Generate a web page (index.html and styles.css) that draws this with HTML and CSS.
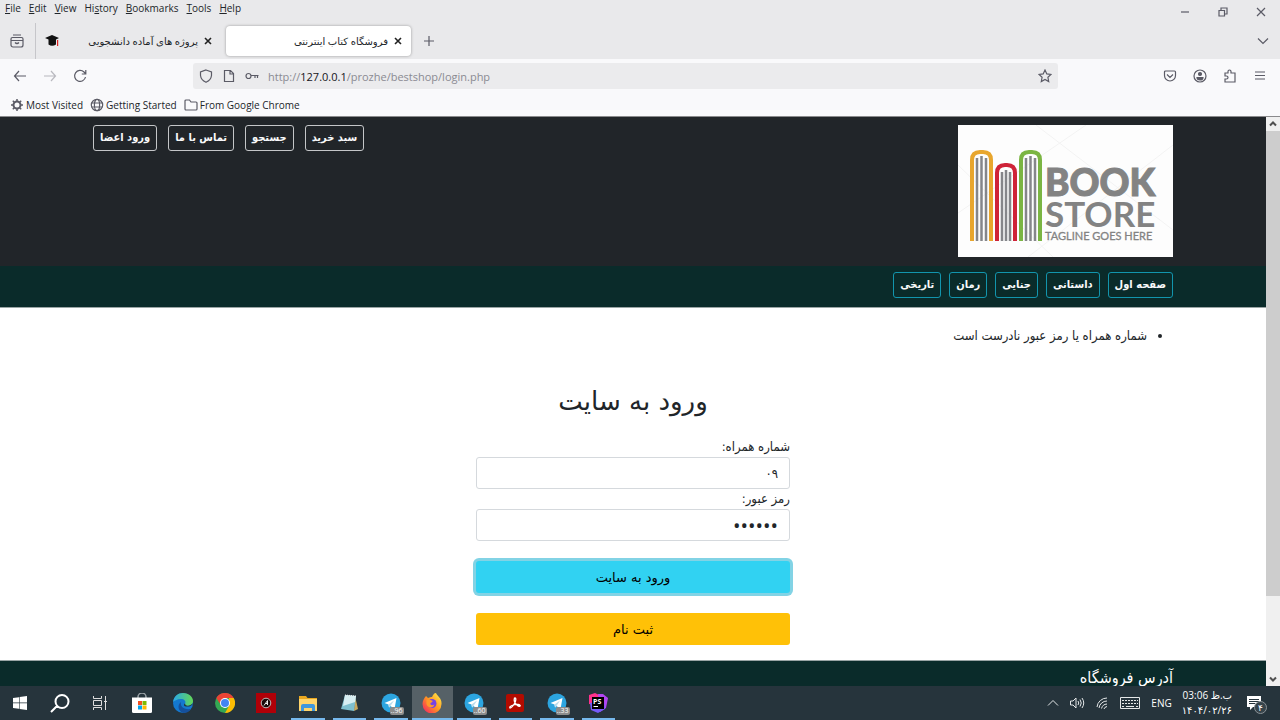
FILE: index.html
```html
<!DOCTYPE html>
<html lang="fa">
<head>
    <meta charset="UTF-8">
    <title>فروشگاه کتاب اینترنتی</title>
    <link rel="stylesheet" href="styles.css">
</head>
<body>
<div class="browser">
    <div class="menubar">
        <button><u>F</u>ile</button>
        <button><u>E</u>dit</button>
        <button><u>V</u>iew</button>
        <button>Hi<u>s</u>tory</button>
        <button><u>B</u>ookmarks</button>
        <button><u>T</u>ools</button>
        <button><u>H</u>elp</button>
        <div class="win-btns">
            <button aria-label="Minimize"><svg width="10" height="10" viewBox="0 0 10 10"><path d="M1 5h8"/></svg></button>
            <button aria-label="Restore"><svg width="10" height="10" viewBox="0 0 10 10"><path d="M1 3.500h5.500V9H1zM3 3V1h6v6H7"/></svg></button>
            <button aria-label="Close"><svg width="10" height="10" viewBox="0 0 10 10"><path d="M1 1l8 8M9 1L1 9"/></svg></button>
        </div>
    </div>
    <div class="tabbar">
        <button class="archive" aria-label="Firefox View"><svg width="14" height="14" viewBox="0 0 14 14"><path d="M3 1h8M2.500 3.500h9a1.500 1.500 0 0 1 1.500 1.500v6a2 2 0 0 1-2 2H3a2 2 0 0 1-2-2V5a1.500 1.500 0 0 1 1.500-1.500zM1 6.500h12M5 8.500q2 2 4 0"/></svg></button>
        <div class="tab">
            <svg class="favicon" width="14" height="14" viewBox="0 0 14 14"><path fill="#111" d="M0 4l7-3 7 3-3 1.500v5Q7 13 3.500 10.500V5.500z"/><path fill="#d22" d="M12 6h1.200v6H12z"/></svg>
            <span dir="rtl">پروژه های آماده دانشجویی</span>
            <button aria-label="Close tab"><svg width="8" height="8" viewBox="0 0 8 8"><path d="M1 1l6 6M7 1L1 7"/></svg></button>
        </div>
        <div class="tab active">
            <span dir="rtl">فروشگاه کتاب اینترنتی</span>
            <button aria-label="Close tab"><svg width="8" height="8" viewBox="0 0 8 8"><path d="M1 1l6 6M7 1L1 7"/></svg></button>
        </div>
        <button class="newtab" aria-label="New tab"><svg width="12" height="12" viewBox="0 0 12 12"><path d="M6 1v10M1 6h10"/></svg></button>
        <button class="alltabs" aria-label="List all tabs"><svg width="12" height="12" viewBox="0 0 12 12"><path d="M1 3.500l5 5 5-5"/></svg></button>
    </div>
    <div class="navbar">
        <div class="nav-btns">
            <button aria-label="Back"><svg width="14" height="14" viewBox="0 0 14 14"><path d="M13 7H1.500M6 2L1.500 7 6 12"/></svg></button>
            <button aria-label="Forward" disabled><svg width="14" height="14" viewBox="0 0 14 14"><path d="M1 7h11.500M8 2l4.500 5L8 12"/></svg></button>
            <button aria-label="Reload"><svg width="14" height="14" viewBox="0 0 14 14"><path d="M12.500 8A5.500 5.500 0 1 1 11 3l1.500 1.500M12.800 1v4h-4"/></svg></button>
        </div>
        <div class="urlbar">
            <svg width="14" height="14" viewBox="0 0 14 14"><path d="M7 1l5.500 2v3.500Q12 11 7 13.300 2 11 1.500 6.500V3z"/></svg>
            <svg width="14" height="14" viewBox="0 0 14 14"><path d="M2.500 1.500h6l3 3v8h-9zM8 1.500V5h3.500"/></svg>
            <svg width="14" height="14" viewBox="0 0 14 14"><circle cx="3.500" cy="7" r="2.500"/><path d="M6 6.500h7.500M10 7v2M12.500 7v2"/></svg>
            <div class="url" role="textbox" aria-label="Address" contenteditable="true" spellcheck="false">http://<b>127.0.0.1</b>/prozhe/bestshop/login.php</div>
            <button aria-label="Bookmark"><svg width="14" height="14" viewBox="0 0 14 14"><path d="M7 1l1.800 3.900 4.200.5-3.100 2.900.8 4.200L7 10.400l-3.700 2.100.8-4.200L1 5.400l4.200-.5z"/></svg></button>
        </div>
        <div class="tools">
            <button aria-label="Pocket"><svg width="14" height="14" viewBox="0 0 14 14"><path d="M2.500 2h9a1 1 0 0 1 1 1v3.500a5.500 5.500 0 0 1-11 0V3a1 1 0 0 1 1-1zM4 5.500l3 3 3-3"/></svg></button>
            <button aria-label="Account"><svg width="14" height="14" viewBox="0 0 14 14"><circle cx="7" cy="7" r="6"/><circle cx="7" cy="5" r="1.500" class="full"/><path class="full" d="M4 8.500h6q0 2.500-3 2.500T4 8.500z"/></svg></button>
            <button aria-label="Extensions"><svg width="14" height="14" viewBox="0 0 14 14"><path d="M2 4h3V2.500a1.500 1.500 0 0 1 3 0V4h4v9H2v-3h1.500a1.500 1.500 0 0 0 0-3H2z"/></svg></button>
            <button aria-label="Menu"><svg width="14" height="14" viewBox="0 0 14 14"><path d="M2 3h10M2 6.500h10M2 10h10"/></svg></button>
        </div>
    </div>
    <div class="bookmarks">
        <a href="#"><svg width="14" height="14" viewBox="0 0 14 14"><circle cx="7" cy="7" r="3.500" stroke-width="2"/><path stroke-width="1.500" d="M7 1v2M7 11v2M1 7h2M11 7h2M2.800 2.800l1.500 1.500M9.700 9.700l1.500 1.500M2.800 11.200l1.500-1.500M9.700 4.300l1.500-1.500"/></svg>Most Visited</a>
        <a href="#"><svg width="14" height="14" viewBox="0 0 14 14"><circle cx="7" cy="7" r="5.700"/><ellipse cx="7" cy="7" rx="2.600" ry="5.700"/><path d="M1.500 5h11M1.500 9h11"/></svg>Getting Started</a>
        <a href="#"><svg width="14" height="14" viewBox="0 0 14 14"><path d="M1 3a1 1 0 0 1 1-1h3.500l1.500 2h5a1 1 0 0 1 1 1v6a1 1 0 0 1-1 1H2a1 1 0 0 1-1-1z"/></svg>From Google Chrome</a>
    </div>
</div>

<div class="viewport">
    <div class="page" dir="rtl">
        <header class="header">
            <div class="container">
                <svg class="logo" width="215" height="132" viewBox="0 0 215 132" role="img" aria-label="Book Store">
                    <rect width="215" height="132" fill="#fdfdfd"/>
                    <path stroke="#f3f3f3" fill="none" d="M78 0L215 105M215 20L70 132M128 0L0 88M0 40l95 92"/>
                    <g fill="none" stroke-width="4">
                        <path stroke="#e8a62e" d="M14 116V35q0-8 8-8h3q8 0 8 8v81"/>
                        <path stroke="#cf2338" d="M39 116V48q0-8 8-8h2q8 0 8 8v68"/>
                        <path stroke="#7bb543" d="M63 116V35q0-8 8-8h3q8 0 8 8v81"/>
                    </g>
                    <path stroke="#85868a" stroke-width="2.500" d="M19 116V33M23.500 116V31M28 116V33M44 116V47M48 116V45M52 116V47M68 116V33M72.500 116V31M77 116V33"/>
                    <g fill="#838383" stroke="#838383" font-family="Lato, sans-serif" direction="ltr">
                        <text x="87" y="71" font-size="37" font-weight="900" stroke-width="1">BOOK</text>
                        <text x="87" y="102" font-size="35" font-weight="700" stroke="none">STORE</text>
                        <text x="87" y="115" font-size="11" stroke-width=".3">TAGLINE GOES HERE</text>
                    </g>
                </svg>
                <nav class="user-links">
                    <a href="#">سبد خرید</a>
                    <a href="#">جستجو</a>
                    <a href="#">تماس با ما</a>
                    <a href="#">ورود اعضا</a>
                </nav>
            </div>
        </header>
        <nav class="cats">
            <div class="container">
                <a href="#">صفحه اول</a>
                <a href="#">داستانی</a>
                <a href="#">جنایی</a>
                <a href="#">رمان</a>
                <a href="#">تاریخی</a>
            </div>
        </nav>
        <main class="container">
            <ul class="errors">
                <li>شماره همراه یا رمز عبور نادرست است</li>
            </ul>
            <form class="login">
                <h2>ورود به سایت</h2>
                <label for="mobile">شماره همراه:</label>
                <input type="text" id="mobile" value="۰۹">
                <label for="pass">رمز عبور:</label>
                <input type="password" id="pass" value="123456">
                <button type="button" class="btn-info">ورود به سایت</button>
                <button type="button" class="btn-warning">ثبت نام</button>
            </form>
        </main>
        <footer class="footer">
            <div class="container">
                <h5>آدرس فروشگاه</h5>
            </div>
        </footer>
    </div>
    <div class="scrollbar">
        <svg width="14" height="14" viewBox="0 0 14 14"><path d="M4 8.500l3-3 3 3"/></svg>
        <div class="track"><div class="thumb"></div></div>
        <svg width="14" height="14" viewBox="0 0 14 14"><path d="M4 5.500l3 3 3-3"/></svg>
    </div>
</div>

<div class="taskbar">
    <div class="sys">
        <button aria-label="Start"><svg width="14" height="14" viewBox="0 0 14 14"><path fill="#fff" d="M0 2l6-.8v5.400H0zM6.600 1.100L14 0v6.600H6.600zM0 7.300h6v5.400L0 12zM6.600 7.300H14V14l-7.400-1.100z"/></svg></button>
        <button aria-label="Search"><svg width="20" height="20" viewBox="0 0 20 20"><path fill="none" stroke="#fff" stroke-width="2" d="M7.500 12.500L1 19M12 2a6.500 6.500 0 1 1 0 13 6.500 6.500 0 0 1 0-13z"/></svg></button>
        <button aria-label="Task view"><svg width="16" height="16" viewBox="0 0 16 16"><path fill="none" stroke="#ddd" d="M1.500 1v2.500h8V1M1.500 5.500h8v5h-8zM1.500 15v-2.500h8V15M13.500 1v14M12 6.500h3"/></svg></button>
    </div>
    <div class="apps">
        <button aria-label="Store"><svg width="20" height="20" viewBox="0 0 20 20"><path fill="none" stroke="#9aa2a6" stroke-width="1.500" d="M6 6V4a4 4 0 0 1 8 0v2"/><path fill="#fff" d="M0 4.500h20v14a1.500 1.500 0 0 1-1.500 1.500h-17A1.500 1.500 0 0 1 0 18.500z"/><path fill="#f25022" d="M6 8h4v4H6z"/><path fill="#7fba00" d="M10.500 8h4v4h-4z"/><path fill="#00a4ef" d="M6 12.500h4v4H6z"/><path fill="#ffb900" d="M10.500 12.500h4v4h-4z"/></svg></button>
        <button aria-label="Edge"><svg width="20" height="20" viewBox="0 0 20 20"><defs><linearGradient id="edge" x1="0" y1="0" x2="1" y2="0"><stop offset="0" stop-color="#2aa8e8"/><stop offset="1" stop-color="#63d855"/></linearGradient></defs><circle cx="10" cy="10" r="10" fill="#1478cf"/><path fill="url(#edge)" d="M0 9C1 3 5 0 10 0c6 0 10 4 10 8 0 3.500-3 5-6 5-2 0-3-1-2-2 1.500-3-1-5-4-5-4 0-7 2-8 3z"/><path fill="#15509c" d="M8 9c-1 4 2 8 10 7-2 3-5 4-8 4-5-2-6-8-2-11z"/><path fill="#26343c" d="M20 10c-1 3-4 4-7 3.500-3-.5-2-2.500-1-3 .5 3 5 3 8-.5z"/></svg></button>
        <button aria-label="Chrome"><svg width="20" height="20" viewBox="0 0 20 20"><circle cx="10" cy="10" r="10" fill="#34a853"/><path fill="#ea4335" d="M1.300 5A10 10 0 0 1 18.700 5H10v5H4.500z"/><path fill="#fbbc04" d="M18.700 5A10 10 0 0 1 10 20l4.300-7.500L14 5z"/><circle cx="10" cy="10" r="5" fill="#fff"/><circle cx="10" cy="10" r="4" fill="#4285f4"/></svg></button>
        <button aria-label="Player"><svg width="20" height="20" viewBox="0 0 20 20"><path fill="#b00008" d="M0 0h20v20H0z"/><circle cx="10" cy="10" r="4.800" fill="#1a0a0a" stroke="#bbb"/><path fill="none" stroke="#eee" d="M8 12.500l3.500-5v4.500M9.500 10.500h2"/></svg></button>
        <button class="open" aria-label="Explorer"><svg width="20" height="20" viewBox="0 0 20 20"><path fill="#e9a820" d="M1 3h7l1.500 2H19v5H1z"/><path fill="#ffd56b" d="M1 6h18v12H1z"/><path fill="#3f97dc" d="M3 18v-5q0-2 2-2h10q2 0 2 2v5h-3v-3H6v3z"/></svg></button>
        <button class="open" aria-label="Notepad"><svg width="20" height="20" viewBox="0 0 20 20"><path fill="#c9a75b" d="M16 3l3 13-4 2z"/><path fill="#7fc0cf" d="M6 2l11 1-2 15-13-2z"/><path fill="#d7eef2" d="M6 2l11 1-1 6L4 13z"/><path fill="none" stroke="#eee" stroke-dasharray="1 1" d="M6 2l11 1"/></svg></button>
        <button class="open" aria-label="Telegram"><svg width="20" height="20" viewBox="0 0 20 20"><circle cx="10" cy="10" r="9.500" fill="#2ca5e0"/><path fill="#fff" d="M3.500 10L15.500 5l-2 11-4-3-1.500 1.500-.5-3z"/><path fill="#b9dced" d="M7.500 11.500l5.500-4-3.500 5.500L8 14.500z"/></svg><span class="badge">..96</span></button>
        <button class="open current" aria-label="Firefox"><svg width="20" height="20" viewBox="0 0 20 20"><defs><linearGradient id="fox" x1="1" y1="0" x2="0" y2="1"><stop offset="0" stop-color="#fff44f"/><stop offset=".5" stop-color="#ff9421"/><stop offset="1" stop-color="#f5156c"/></linearGradient></defs><path fill="url(#fox)" d="M4 3l2 2c2-1 3-1 4-1 1-2 2-4 4-4 1 3 6 5 5.500 11A9.500 9.500 0 0 1 .5 11C.5 8 2 5 4 3z"/><circle cx="10" cy="10.500" r="4.500" fill="#7542e5"/><path fill="#ff9a2a" d="M4.500 7C7 6 8 7 10 7.500c1.500.5 0 2-1.500 2.500-1 2 2 3 4 1.500-1 4-7 4-8-.5z"/></svg></button>
        <button class="open" aria-label="Telegram"><svg width="20" height="20" viewBox="0 0 20 20"><circle cx="10" cy="10" r="9.500" fill="#2ca5e0"/><path fill="#fff" d="M3.500 10L15.500 5l-2 11-4-3-1.500 1.500-.5-3z"/><path fill="#b9dced" d="M7.500 11.500l5.500-4-3.500 5.500L8 14.500z"/></svg><span class="badge">..60</span></button>
        <button class="open" aria-label="Acrobat"><svg width="20" height="20" viewBox="0 0 20 20"><rect x="1" y="1" width="18" height="18" rx="2" fill="#b30b00"/><path fill="none" stroke="#fff" stroke-width="1.300" d="M9.500 5c2-1 1.500 3 0 5.500S6 15 5 15c-1.500-1.500 4-4 8-3.500 4 .5 2 3-.5 1C10.500 11 8.500 8 9.500 5z"/></svg></button>
        <button class="open" aria-label="Telegram"><svg width="20" height="20" viewBox="0 0 20 20"><circle cx="10" cy="10" r="9.500" fill="#2ca5e0"/><path fill="#fff" d="M3.500 10L15.500 5l-2 11-4-3-1.500 1.500-.5-3z"/><path fill="#b9dced" d="M7.500 11.500l5.500-4-3.500 5.500L8 14.500z"/></svg><span class="badge">..33</span></button>
        <button class="open" aria-label="PhpStorm"><svg width="20" height="20" viewBox="0 0 20 20"><path fill="#ff318c" d="M1 2l6-2 6 3-5 9-7-1z"/><path fill="#b345f1" d="M10 1h5l5 4-2 10-6 4z"/><path fill="#765af8" d="M2 10l14-2 1 8-7 4-7-3z"/><path fill="#000" d="M4 4h12v12H4z"/><path fill="#fff" d="M5.500 13h4.500v1H5.500z"/><text x="5" y="11" fill="#fff" font-family="Open Sans, sans-serif" font-size="7" font-weight="700">PS</text></svg></button>
    </div>
    <div class="tray">
        <svg width="12" height="12" viewBox="0 0 12 12"><path d="M1 8.500l5-5 5 5"/></svg>
        <svg width="16" height="14" viewBox="0 0 16 14"><path d="M1.500 5v4H4l3 3V2L4 5zM9 5q1.500 2 0 4M11 3.500q2.500 3.500 0 7M13 2q3.500 5 0 10"/></svg>
        <svg width="14" height="14" viewBox="0 0 14 14"><path d="M2 11A10 10 0 0 1 12 2M4 12a8 8 0 0 1 8-7M6.500 12.500A6 6 0 0 1 12 8M9 13q.5-2 3-2.500"/></svg>
        <svg width="22" height="14" viewBox="0 0 22 14"><path d="M1.500 1.500h19v11h-19z"/><path stroke-dasharray="2 1" d="M3 4.500h16M3 7.500h16"/><path d="M3 10.500h2M7 10.500h8M17 10.500h2"/></svg>
        <span class="lang">ENG</span>
        <div class="clock" dir="rtl"><span>ب.ظ 03:06</span><span>۱۴۰۴/۰۲/۲۶</span></div>
        <button class="notif" aria-label="Notifications"><svg width="16" height="16" viewBox="0 0 16 16"><path fill="#fff" stroke="none" d="M1 1h14v11H7l-3 3v-3H1z"/><path stroke="#26343c" d="M3 4.500h10M3 6.500h10M3 8.500h6"/></svg><span class="count">۴</span></button>
    </div>
</div>
</body>
</html>
```
FILE: styles.css
```css
*{
    margin:0;
    padding:0;
    box-sizing:border-box;
}
body{
    display:flex;
    flex-direction:column;
    height:100vh;
    overflow:hidden;
    font-family:"Open Sans","DejaVu Sans",sans-serif;
    font-size:10px;
    color:#212529;
}
button,input{
    font-family:inherit;
    font-size:inherit;
    color:inherit;
}
button{
    border:none;
    background:none;
}
a{
    color:inherit;
    text-decoration:none;
}
svg{
    display:block;
    flex:none;
}

/* browser chrome */
.browser{
    background:#e9e9eb;
    border-bottom:1px solid #8a8a8c;
}
.browser svg{
    fill:none;
    stroke:#5b5b66;
    stroke-width:1.2;
}
.browser svg .full{
    fill:#5b5b66;
}
.menubar{
    display:flex;
    align-items:flex-start;
    gap:8px;
    height:23px;
    padding-left:5px;
}
.menubar > button{
    line-height:16px;
}
.win-btns{
    display:flex;
    margin-left:auto;
}
.win-btns button{
    width:38px;
    height:23px;
    padding-left:14px;
}
.tabbar{
    display:flex;
    align-items:center;
    height:36px;
}
.archive{
    display:flex;
    align-items:center;
    width:36px;
    height:36px;
    padding-left:10px;
    border-right:1px solid #c6c6ca;
}
.tab{
    display:flex;
    align-items:center;
    gap:6px;
    width:185px;
    height:30px;
    padding:0 9px;
    border-radius:4px;
}
.tab span{
    flex:1;
}
.browser .tab svg{
    stroke:#222;
    stroke-width:1.6;
}
.browser .tab .favicon{
    stroke:none;
}
.tab.active{
    margin-left:5px;
    background:#fff;
    box-shadow:0 0 3px rgba(0,0,0,.35);
}
.newtab{
    padding:0 12px;
}
.alltabs{
    margin-left:auto;
    padding-right:11px;
}
.navbar{
    display:flex;
    align-items:center;
    height:34px;
    background:#f9f9fb;
}
.nav-btns{
    display:flex;
    gap:16px;
    width:193px;
    padding-left:13px;
}
.nav-btns button:disabled{
    opacity:.4;
}
.urlbar{
    flex:1;
    display:flex;
    align-items:center;
    gap:9px;
    height:26px;
    padding:0 6px;
    border-radius:3px;
    background:#ebebed;
}
.url{
    flex:1;
    font-size:11px;
    color:#8a8a92;
    outline:none;
}
.url b{
    font-weight:normal;
    color:#15141a;
}
.tools{
    display:flex;
    justify-content:flex-end;
    gap:16px;
    width:222px;
    padding-right:13px;
}
.bookmarks{
    display:flex;
    align-items:center;
    gap:7px;
    height:23px;
    padding-left:10px;
    background:#f9f9fb;
}
.bookmarks a{
    display:flex;
    align-items:center;
    gap:2px;
}

/* site */
.viewport{
    flex:1;
    display:flex;
    min-height:0;
}
.page{
    flex:1;
    overflow:hidden;
    background:#fff;
    font-family:"DejaVu Sans Condensed","DejaVu Sans",sans-serif;
    font-size:13px;
}
.container{
    display:flex;
    max-width:1080px;
    margin:0 auto;
}
.header{
    padding:8px 0 9px;
    background:#212529;
}
.header .container{
    justify-content:space-between;
    align-items:flex-start;
}
.user-links{
    display:flex;
    gap:11px;
}
.user-links a,.cats a{
    padding:0 6px;
    border:1px solid #c4c6c8;
    border-radius:3px;
    color:#f8f9fa;
    font-size:11px;
    font-weight:bold;
    line-height:24px;
}
.cats{
    padding:6px 0 9px;
    background:#0a2b2a;
    border-bottom:1px solid #9aa5a5;
}
.cats .container{
    gap:8px;
}
.cats a{
    border-color:#1295ad;
}
main.container{
    display:block;
}
.errors{
    padding:18px 26px 0 0;
    line-height:20px;
}
.login{
    display:flex;
    flex-direction:column;
    width:314px;
    margin:0 auto;
    padding:33px 0 15px;
}
.login h2{
    margin-bottom:14px;
    font-family:"DejaVu Sans",sans-serif;
    font-size:26px;
    font-weight:normal;
    line-height:44px;
    text-align:center;
}
.login label{
    line-height:20px;
}
.login input{
    height:32px;
    padding:0 11px;
    border:1px solid #d5d9dd;
    border-radius:3px;
    outline:none;
}
.login input[type=password]{
    font-family:"Open Sans",sans-serif;
    font-size:20px;
}
.login button{
    height:32px;
    margin-top:20px;
    border-radius:3px;
    font-family:"DejaVu Sans",sans-serif;
    color:#000;
}
.btn-info{
    background:#31d2f2;
    box-shadow:0 0 0 3px #82d3e5;
}
.btn-warning{
    background:#ffc107;
}
.footer{
    min-height:60px;
    padding-top:6px;
    background:#0a2b2a;
    border-top:1px solid #9aa5a5;
    color:#fff;
}
.footer h5{
    font-size:16px;
    font-weight:normal;
    line-height:22px;
}
.scrollbar{
    display:flex;
    flex-direction:column;
    width:14px;
    background:#f0f0f0;
}
.scrollbar svg{
    fill:none;
    stroke:#505050;
    stroke-width:2;
}
.track{
    flex:1;
}
.thumb{
    height:86%;
    background:#cdcdcd;
}

/* taskbar */
.taskbar{
    display:flex;
    height:34px;
    background:#26343c;
    color:#fff;
}
.taskbar button{
    display:flex;
    align-items:center;
    justify-content:center;
    position:relative;
}
.sys{
    display:flex;
}
.sys button{
    width:40px;
}
.apps{
    display:flex;
    width:498px;
    margin-left:1px;
}
.apps button{
    flex:1;
}
.apps .open::after{
    content:"";
    position:absolute;
    bottom:0;
    left:4px;
    right:4px;
    height:2px;
    background:#76b9ed;
}
.apps .current{
    background:#566167;
}
.apps .current::after{
    left:0;
    right:0;
}
.badge{
    position:absolute;
    right:8px;
    bottom:5px;
    padding:0 1px;
    border-radius:2px;
    background:#8c8c8c;
    font-size:7px;
    line-height:8px;
}
.tray{
    display:flex;
    align-items:center;
    gap:10px;
    margin-left:auto;
    padding-right:18px;
}
.tray svg{
    fill:none;
    stroke:#e4e7e8;
}
.clock{
    display:flex;
    flex-direction:column;
    line-height:15px;
    text-align:right;
}
.notif{
    margin-left:4px;
}
.notif .count{
    position:absolute;
    top:6px;
    left:8px;
    width:13px;
    height:13px;
    border:1px solid #8b9296;
    border-radius:50%;
    background:#37444b;
    font-size:9px;
    line-height:11px;
}
```
